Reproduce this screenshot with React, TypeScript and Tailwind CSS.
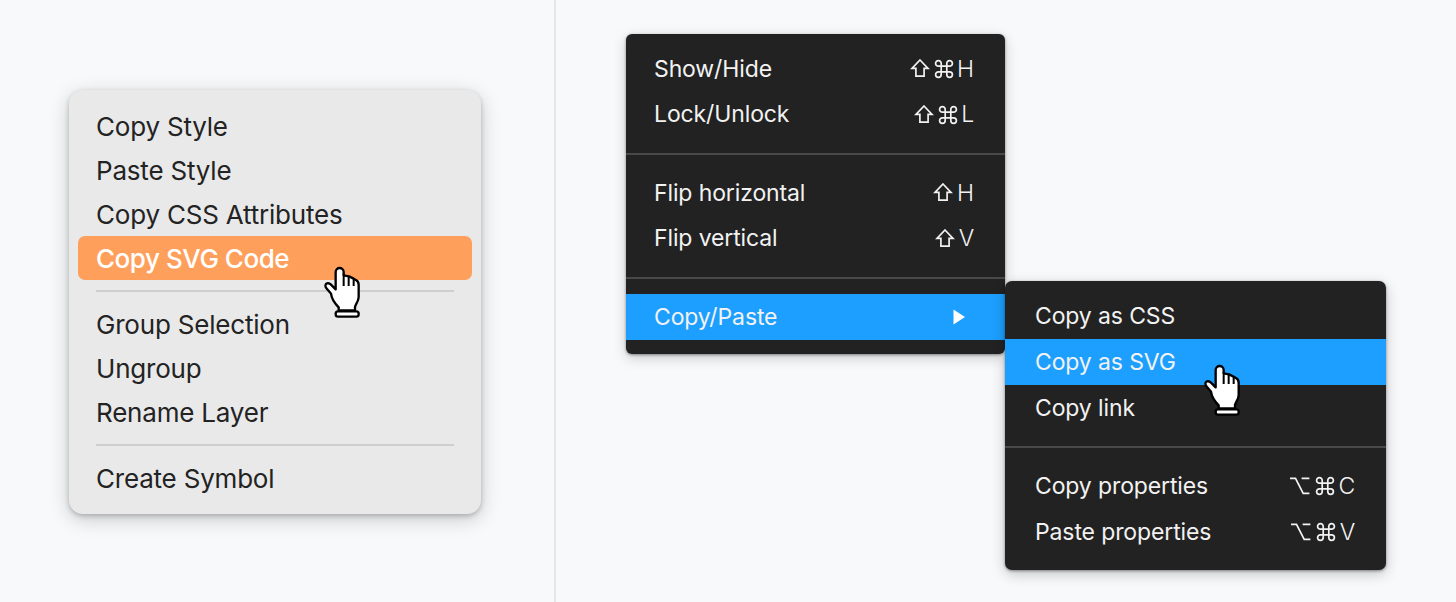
import React from "react";

type Key = "shift" | "cmd" | "opt" | "H" | "L" | "V" | "C";

function KeyGlyph({ k }: { k: Key }) {
  if (k === "shift")
    return (
      <svg width="20" height="20" viewBox="0 0 20 20" fill="none" stroke="#f2f2f2" strokeWidth="1.7" className="mr-[4px]">
        <path d="M10 1 L18 9.4 H14.1 V17.2 H5.9 V9.4 H2 Z" />
      </svg>
    );
  if (k === "cmd")
    return (
      <svg width="20" height="20" viewBox="0 0 20 20" fill="none" stroke="#f2f2f2" strokeWidth="1.7" className="mr-[3.6px]">
        <path d="M7.2 7.2 V4.4 A2.8 2.8 0 1 0 4.4 7.2 H15.6 A2.8 2.8 0 1 0 12.8 4.4 V15.6 A2.8 2.8 0 1 0 15.6 12.8 H4.4 A2.8 2.8 0 1 0 7.2 15.6 Z" />
      </svg>
    );
  if (k === "opt")
    return (
      <svg width="22" height="20" viewBox="0 0 22 20" fill="none" stroke="#f2f2f2" strokeWidth="1.7" className="mr-[3.6px]">
        <path d="M1 2.4 H6.5 L14.2 17.4 H20.4 M12.6 2.4 H20.4" />
      </svg>
    );
  return <span>{k}</span>;
}

function Hand({ className }: { className: string }) {
  return (
    <svg className={className} width="70" height="70" viewBox="0 0 210 210" stroke="#000" strokeWidth="7" strokeLinejoin="round" strokeLinecap="round">
      <path
        fill="#fff"
        d="M77 103 V51 C77 35 101 35 101 51 V61 L117 64 L131 71 L139 76 C144 79 146 84 146 90 V126 C146 139 136 148 135 156 V166 H86 V157 C74 145 65 133 63 116 C58 109 50 102 47 96 C43 84 56 82 63 89 Z"
      />
      <path fill="none" strokeLinecap="butt" strokeWidth="6" d="M101 56 V93 M116 64 V93 M131 72 V93" />
      <rect x="77" y="169" width="69" height="16" rx="7" fill="#fff" />
    </svg>
  );
}

function LightItem({ label, active }: { label: string; active?: boolean }) {
  return (
    <div
      className={
        active
          ? "flex h-[44px] items-center rounded-[7px] bg-[#ff9f5c] pl-[18px] font-medium tracking-[-0.45px] text-white"
          : "flex h-[44px] items-center pl-[18px] tracking-[-0.2px]"
      }
    >
      {label}
    </div>
  );
}

function DarkItem({ label, keys, active, arrow }: { label: string; keys?: Key[]; active?: boolean; arrow?: boolean }) {
  return (
    <div className={`flex h-[45.7px] items-center justify-between pr-[31px] pl-[28px] ${active ? "bg-[#1c9fff]" : ""}`}>
      <span>{label}</span>
      {keys && (
        <span className="flex items-center font-light">
          {keys.map((k) => (
            <KeyGlyph key={k} k={k} />
          ))}
        </span>
      )}
      {arrow && (
        <svg width="12" height="16" viewBox="0 0 12 16" className="mr-[9px]" fill="#fff">
          <path d="M0.5 0.5 L12 8 L0.5 15.5 Z" />
        </svg>
      )}
    </div>
  );
}

const DarkRule = () => <div className="mt-[15.3px] mb-[15.3px] h-[2px] bg-[#494949]" />;

export default function App() {
  return (
    <div className="flex h-[602px] w-[1456px] overflow-hidden bg-[#f8f9fb] font-['Inter',sans-serif]">
      <section className="w-[556px] shrink-0 border-r-2 border-[#e5e6e8] pt-[90px] pl-[69px]">
        <div className="relative h-[424px] w-[412px] rounded-[14px] bg-[#e9e9e9] px-[9px] pt-[14px] text-[26px] text-[#232323] shadow-[0_5px_20px_rgba(0,0,0,0.2),0_2px_5px_rgba(0,0,0,0.2)]">
          <LightItem label="Copy Style" />
          <LightItem label="Paste Style" />
          <LightItem label="Copy CSS Attributes" />
          <LightItem label="Copy SVG Code" active />
          <div className="mx-[18px] mt-[10px] mb-[10px] h-[2px] bg-[#cecece]" />
          <LightItem label="Group Selection" />
          <LightItem label="Ungroup" />
          <LightItem label="Rename Layer" />
          <div className="mx-[18px] mt-[10px] mb-[10px] h-[2px] bg-[#cecece]" />
          <LightItem label="Create Symbol" />
          <Hand className="absolute top-[165px] left-[241px]" />
        </div>
      </section>
      <section className="flex flex-1 items-start pl-[70px] text-[23px] tracking-[-0.12px] text-[#f2f2f2]">
        <div className="mt-[34px] h-[320.4px] w-[379px] overflow-hidden rounded-[6px] bg-[#222] pt-[12px] shadow-[0_4px_14px_rgba(0,0,0,0.18),0_1px_3px_rgba(0,0,0,0.4)]">
          <DarkItem label="Show/Hide" keys={["shift", "cmd", "H"]} />
          <DarkItem label="Lock/Unlock" keys={["shift", "cmd", "L"]} />
          <DarkRule />
          <DarkItem label="Flip horizontal" keys={["shift", "H"]} />
          <DarkItem label="Flip vertical" keys={["shift", "V"]} />
          <DarkRule />
          <DarkItem label="Copy/Paste" active arrow />
        </div>
        <div className="relative mt-[280.6px] h-[289.4px] w-[381px] rounded-[7px] bg-[#222] pt-[13px] shadow-[0_4px_14px_rgba(0,0,0,0.22),0_1px_3px_rgba(0,0,0,0.4)] [&>div>span:first-child]:ml-[2px]">
          <DarkItem label="Copy as CSS" />
          <DarkItem label="Copy as SVG" active />
          <DarkItem label="Copy link" />
          <DarkRule />
          <DarkItem label="Copy properties" keys={["opt", "cmd", "C"]} />
          <DarkItem label="Paste properties" keys={["opt", "cmd", "V"]} />
          <Hand className="absolute top-[72.4px] left-[185px]" />
        </div>
      </section>
    </div>
  );
}
